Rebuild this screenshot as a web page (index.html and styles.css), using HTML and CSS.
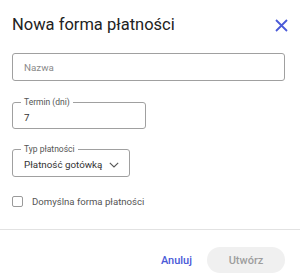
FILE: index.html
```html
<!DOCTYPE html>
<html lang="pl">
<head>
<meta charset="utf-8">
<link rel="stylesheet" href="styles.css">
</head>
<body>
<div class="dialog">
  <header class="head">
    <h1 class="title">Nowa forma płatności</h1>
    <button class="close" aria-label="Zamknij">
      <svg width="13" height="13" viewBox="0 0 13 13"><path d="M1 1L12 12M12 1L1 12" stroke="#4a5ad8" stroke-width="1.8" fill="none"/></svg>
    </button>
  </header>
  <div class="body">
    <div class="field nazwa"><span class="placeholder">Nazwa</span></div>
    <div class="field outlined termin">
      <span class="legend">Termin (dni)</span>
      <span class="value">7</span>
    </div>
    <div class="field outlined typ">
      <span class="legend">Typ płatności</span>
      <span class="value">Płatność gotówką</span>
      <svg class="chev" width="10" height="6" viewBox="0 0 10 6"><path d="M0.8 0.8L5 5L9.2 0.8" stroke="#555" stroke-width="1.1" fill="none"/></svg>
    </div>
    <label class="check"><span class="box"></span><span class="check-label">Domyślna forma płatności</span></label>
  </div>
  <div class="divider"></div>
  <footer class="foot">
    <button class="cancel">Anuluj</button>
    <button class="create">Utwórz</button>
  </footer>
</div>
</body>
</html>
```
FILE: styles.css
```css
* { box-sizing: border-box; }
html, body { margin: 0; padding: 0; background: #fff; }
body { font-family: Roboto, "Noto Sans", Arial, sans-serif; color: #333; }
.dialog { width: 300px; height: 278px; }
.head {
  display: flex;
  align-items: center;
  justify-content: space-between;
  padding: 13px 12px 0 12px;
  height: 37px;
}
.title {
  margin: 0;
  font-size: 16.5px;
  font-weight: 400;
  line-height: 24px;
  color: #222;
}
.close {
  border: 0;
  background: none;
  padding: 0;
  width: 13px;
  height: 13px;
  display: flex;
  margin-top: 1px;
}
.body { padding: 16px 15px 0 12px; }
.field {
  border: 1px solid #a0a0a0;
  border-radius: 3px;
  display: flex;
  align-items: center;
  padding: 0 11px;
  position: relative;
}
.nazwa { height: 28px; }
.placeholder { font-size: 9.8px; color: #8a8a8a; }
.termin { width: 134px; height: 27px; margin-top: 21px; }
.typ { width: 118px; height: 28px; margin-top: 20px; padding-right: 6px; }
.legend {
  position: absolute;
  top: -6px;
  left: 8px;
  padding: 0 3px;
  background: #fff;
  font-size: 8.5px;
  line-height: 10px;
  color: #555;
  white-space: nowrap;
}
.value { font-size: 9.8px; color: #333; padding-top: 3px; white-space: nowrap; }
.chev { margin-left: 7px; margin-top: 3px; flex: none; }
.check {
  display: flex;
  align-items: center;
  margin-top: 19px;
  height: 11px;
}
.box {
  width: 11px;
  height: 11px;
  border: 1px solid #9a9a9a;
  border-radius: 2px;
}
.check-label { margin-left: 9px; font-size: 9.6px; color: #555; }
.divider { margin-top: 22px; height: 1px; background: #e2e2e2; }
.foot {
  display: flex;
  justify-content: flex-end;
  align-items: center;
  padding: 17px 15px 0 0;
  gap: 15px;
}
.cancel {
  border: 0;
  background: none;
  padding: 0;
  font-family: inherit;
  font-size: 11px;
  font-weight: 500;
  color: #4a5ad8;
}
.create {
  border: 0;
  background: #f0f0f0;
  border-radius: 13px;
  width: 78px;
  height: 26px;
  font-family: inherit;
  font-size: 11px;
  font-weight: 500;
  color: #9e9e9e;
}
```
